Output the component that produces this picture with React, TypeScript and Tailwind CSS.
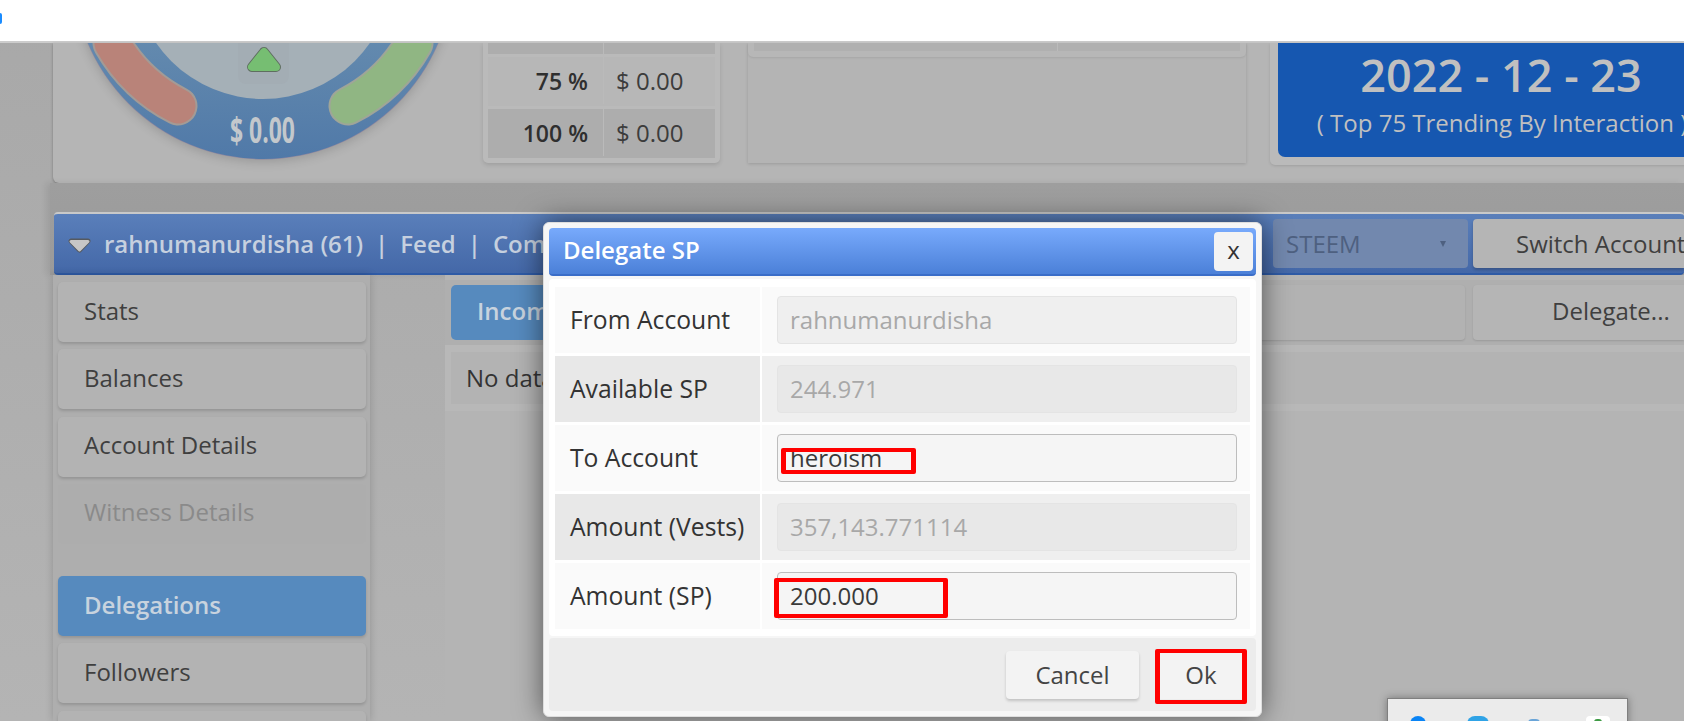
const sideItems = [
  { label: 'Stats' },
  { label: 'Balances' },
  { label: 'Account Details' },
  { label: 'Witness Details', disabled: true },
  { label: 'Delegations', active: true, spaced: true },
  { label: 'Followers' },
  { label: '' },
];

const formRows = [
  { label: 'From Account', value: 'rahnumanurdisha', disabled: true },
  { label: 'Available SP', value: '244.971', disabled: true, shaded: true },
  { label: 'To Account', value: 'heroism' },
  { label: 'Amount (Vests)', value: '357,143.771114', disabled: true, shaded: true },
  { label: 'Amount (SP)', value: '200.000' },
];

function Gauge() {
  return (
    <svg width="384" height="140" viewBox="71 43 384 140" className="shrink-0">
      <defs>
        <filter id="gaugeShadow" x="-10%" y="-10%" width="120%" height="120%">
          <feGaussianBlur stdDeviation="6" />
        </filter>
        <linearGradient id="ringFill" x1="0" y1="0" x2="0" y2="1">
          <stop offset="0.5" stopColor="#6f94b2" />
          <stop offset="1" stopColor="#5079a8" />
        </linearGradient>
      </defs>
      <circle cx="263" cy="-29" r="190" fill="#000" opacity="0.18" filter="url(#gaugeShadow)" />
      <circle cx="263" cy="-31" r="190.5" fill="#8f86a0" />
      <circle cx="263" cy="-31" r="190" fill="url(#ringFill)" />
      <circle cx="263" cy="-31" r="130" fill="#a5b0b7" />
      <path d="M112 43 A160 160 0 0 0 178 106" fill="none" stroke="#a39b96" strokeWidth="39" strokeLinecap="round" />
      <path d="M112 43 A160 160 0 0 0 178 106" fill="none" stroke="#b98379" strokeWidth="35" strokeLinecap="round" />
      <path d="M414 43 A160 160 0 0 1 348 106" fill="none" stroke="#9fa598" strokeWidth="39" strokeLinecap="round" />
      <path d="M414 43 A160 160 0 0 1 348 106" fill="none" stroke="#90b683" strokeWidth="35" strokeLinecap="round" />
      <rect x="238" y="30" width="51" height="54" rx="8" fill="#a3adb4" />
      <path d="M264 52 L252 67 L276 67 Z" fill="#5f6e60" stroke="#5f6e60" strokeWidth="10" strokeLinejoin="round" />
      <path d="M264 52 L252 67 L276 67 Z" fill="#76be72" stroke="#76be72" strokeWidth="8" strokeLinejoin="round" />
      <text
        x="230"
        y="143"
        textLength="65"
        lengthAdjust="spacingAndGlyphs"
        fontFamily="'Open Sans', sans-serif"
        fontWeight="700"
        fontSize="35"
        fill="#c3c8cc"
      >
        $ 0.00
      </text>
    </svg>
  );
}

function PayoutTable() {
  return (
    <div className="ml-[28px] w-[237px] h-[120px] shrink-0 bg-[#bababa] rounded-b-[5px] shadow-[0_2px_4px_rgba(0,0,0,0.12)] px-[5px] flex flex-col gap-[3px]">
      <div className="flex h-[11px] bg-[#adadad]">
        <div className="w-[116px] border-r border-[#bababa]" />
      </div>
      {[
        { pct: '75 %', shaded: false },
        { pct: '100 %', shaded: true },
      ].map((row) => (
        <div key={row.pct} className={`flex h-[49px] pb-[2px] items-center ${row.shaded ? 'bg-[#adadad]' : 'bg-[#b7b7b7]'}`}>
          <div className="w-[116px] h-full flex items-center justify-end pr-[15px] text-[23px] font-semibold text-[#2f2f2f] border-r border-[#bababa]">
            {row.pct}
          </div>
          <div className="pl-[12px] text-[#3c3c3c]">$ 0.00</div>
        </div>
      ))}
    </div>
  );
}

function TopPanel() {
  return (
    <div className="ml-[53px] h-[140px] bg-[#b5b5b5] rounded-bl-[6px] shadow-[0_1px_3px_rgba(0,0,0,0.3)] pl-[18px] flex items-start overflow-hidden">
      <Gauge />
      <PayoutTable />
      <div className="ml-[28px] w-[498px] h-[120px] shrink-0 bg-[#b4b4b4] shadow-[0_1px_3px_rgba(0,0,0,0.15)]">
        <div className="h-[14px] bg-[#b7b7b7] rounded-b-[5px] px-[6px] shadow-[0_1px_2px_rgba(0,0,0,0.08)]">
          <div className="h-[8px] flex bg-[#b0b0b0]">
            <div className="w-[304px] border-r border-[#bbbbbb]" />
          </div>
        </div>
      </div>
      <div className="ml-[24px] flex-1 h-[122px] bg-[#bababa] rounded-bl-[5px] pl-[8px] shadow-[0_1px_3px_rgba(0,0,0,0.12)]">
        <div className="h-[114px] bg-[#1657b0] rounded-bl-[7px] flex flex-col items-start text-[#c0c0c0]">
          <div className="w-[446px] shrink-0 text-center">
            <div className="text-[45px] leading-[52px] font-semibold mt-[6px]">2022 - 12 - 23</div>
            <div className="text-[24px] leading-[32px] whitespace-nowrap mt-[6px] pl-[2px]">( Top 75 Trending By Interaction )</div>
          </div>
        </div>
      </div>
    </div>
  );
}

function AccountBar() {
  return (
    <div className="ml-[4px] h-[63px] border-t-2 border-[#c9c9c9] bg-gradient-to-b from-[#5a7fba] to-[#4468a8] border-b-2 border-b-[#2f5ba6] rounded-[4px] flex items-center pl-[12px] overflow-hidden">
      <svg width="28" height="20" viewBox="0 0 28 20" className="shrink-0">
        <path d="M5 7 H22 L13.5 16 Z" fill="#55595f" stroke="#55595f" strokeWidth="5" strokeLinejoin="round" />
        <path d="M5 7.5 H22 L13.5 16 Z" fill="#c6c6c6" stroke="#c6c6c6" strokeWidth="3" strokeLinejoin="round" />
      </svg>
      <div className="ml-[10px] flex-1 flex items-center text-[#c6d0df] font-semibold whitespace-nowrap">
        <span>rahnumanurdisha (61)</span>
        <span className="mx-[12px]">|</span>
        <span>Feed</span>
        <span className="mx-[12px]">|</span>
        <span>Communities</span>
      </div>
      <div className="w-[195px] h-[49px] shrink-0 bg-[#7288ae] rounded-[4px] flex items-center justify-between pl-[13px] pr-[22px] text-[#4e6080]">
        <span>STEEM</span>
        <span className="w-0 h-0 border-x-[3.5px] border-x-transparent border-t-[6px] border-t-[#4e6080]" />
      </div>
      <div className="ml-[5px] w-[211px] h-[49px] shrink-0 bg-[#b5b5b5] rounded-l-[4px] flex items-center pl-[43px] text-[#3f3f3f] whitespace-nowrap shadow-[0_2px_3px_rgba(0,0,0,0.2)]">
        Switch Account
      </div>
    </div>
  );
}

function Sidebar() {
  return (
    <div className="w-[317px] shrink-0 ml-[53px] bg-[#aeaeae] pl-[5px] pr-[4px] pt-[7px] flex flex-col gap-[7.3px] shadow-[0_0_8px_rgba(0,0,0,0.18)]">
      {sideItems.map((item, i) => (
        <div
          key={i}
          className={`h-[60px] shrink-0 rounded-[5px] pl-[26px] pb-[3px] flex items-center shadow-[0_2px_3px_rgba(0,0,0,0.15)] ${
            item.spaced ? 'mt-[25px]' : ''
          } ${
            item.active
              ? 'bg-[#568abe] text-[#c8d3de] font-semibold'
              : item.disabled
                ? 'bg-[#adadad] text-[#8a8a8a] shadow-none'
                : 'bg-[#b3b3b3] text-[#3f3f3f]'
          }`}
        >
          {item.label}
        </div>
      ))}
    </div>
  );
}

function Content() {
  return (
    <div className="flex-1 min-w-0 ml-[75px] bg-[#b4b4b4]">
      <div className="mt-[5px] h-[65px] bg-[#afafaf] pl-[6px] py-[5px] flex gap-[8px]">
        <div className="w-[180px] bg-[#568abe] rounded-[5px] pl-[26px] pb-[4px] flex items-center font-semibold text-[#c8d3de]">
          Incoming
        </div>
        <div className="w-[826px] bg-[#b2b2b2] rounded-[4px] shadow-[0_1px_2px_rgba(0,0,0,0.12)]" />
        <div className="flex-1 bg-[#b5b5b5] rounded-l-[4px] pl-[79px] pb-[4px] flex items-center text-[#3f3f3f] shadow-[0_1px_2px_rgba(0,0,0,0.12)]">
          Delegate...
        </div>
      </div>
      <div className="h-[66px] bg-[#b8b8b8] pl-[6px] py-[7px]">
        <div className="h-full bg-[#b3b3b3] pl-[15px] flex items-center text-[#333]">No data</div>
      </div>
    </div>
  );
}

function DelegateModal() {
  return (
    <div className="absolute left-[543px] top-[222px] w-[719px] h-[495px] bg-[#f6f6f6] rounded-[6px] border border-[#dedede] shadow-[0_0_28px_rgba(0,0,0,0.55)] pt-[5px] px-[5px] flex flex-col">
      <div className="h-[48px] shrink-0 bg-gradient-to-b from-[#78aafc] to-[#4b80d8] border-b-2 border-[#3a6dc8] rounded-[4px] flex items-center justify-between pl-[14px] pr-[3px]">
        <span className="font-semibold text-white pb-[2px]">Delegate SP</span>
        <span className="w-[39px] h-[39px] bg-[#f3f3f3] rounded-[4px] flex items-center justify-center text-[#333] pb-[3px]">x</span>
      </div>
      <div className="mt-[3px] h-[357px] shrink-0 bg-white rounded-[4px] px-[6px] pt-[8px] flex flex-col gap-[3px]">
        {formRows.map((row) => (
          <div key={row.label} className="h-[66px] shrink-0 flex gap-[2px]">
            <div className={`w-[205px] shrink-0 pl-[15px] pb-[1px] flex items-center text-[24.7px] font-medium text-[#333] ${row.shaded ? 'bg-[#e8e8e8]' : 'bg-[#fafafa]'}`}>
              {row.label}
            </div>
            <div className={`flex-1 flex items-center pl-[15px] pr-[13px] ${row.shaded ? 'bg-[#efefef]' : 'bg-[#fafafa]'}`}>
              <div
                className={`h-[48px] w-full rounded-[4px] border pl-[12px] pb-[1px] flex items-center ${
                  row.disabled
                    ? `border-[#e4e4e4] text-[#a8a8a8] ${row.shaded ? 'bg-[#e8e8e8]' : 'bg-[#efefef]'}`
                    : 'border-[#bdbdbd] bg-[#f5f5f5] text-[#3a3a3a]'
                }`}
              >
                {row.value}
              </div>
            </div>
          </div>
        ))}
      </div>
      <div className="mt-[2px] h-[73px] shrink-0 bg-[#ececec] rounded-[4px] flex items-center justify-end gap-[21px] pr-[14px]">
        <div className="w-[133px] h-[48px] bg-[#f3f3f3] rounded-[4px] flex items-center justify-center text-[#444] shadow-[0_2px_3px_rgba(0,0,0,0.18)]">
          Cancel
        </div>
        <div className="w-[82px] h-[48px] bg-[#f3f3f3] flex items-center justify-center text-[#444]">Ok</div>
      </div>
      {/* red annotation boxes drawn over the screenshot */}
      <div className="absolute left-[237px] top-[225px] w-[135px] h-[26px] border-y-4 border-x-[5px] border-[#f00] rounded-[2px]" />
      <div className="absolute left-[230px] top-[355px] w-[174px] h-[40px] border-y-4 border-x-[5px] border-[#f00] rounded-[2px]" />
      <div className="absolute left-[611px] top-[426px] w-[92px] h-[55px] border-y-4 border-x-[5px] border-[#f00] rounded-[2px]" />
    </div>
  );
}

function TrayPopup() {
  return (
    <div className="absolute left-[1387px] top-[698px] w-[241px] h-[40px] bg-[#ebebeb] border border-[#7f7f7f] shadow-[0_0_8px_rgba(0,0,0,0.35)]">
      <div className="absolute left-[22px] top-[17px] w-[16px] h-[16px] rounded-full bg-[#0a84f5]" />
      <div className="absolute left-[79px] top-[17px] w-[22px] h-[10px] bg-[#2fa3e6] rounded-t-[8px]" />
      <div className="absolute left-[140px] top-[20px] w-[12px] h-[8px] bg-[#6aa5d8] rounded-t-[4px]" />
      <div className="absolute left-[198px] top-[17px] w-[24px] h-[20px] bg-white rounded-t-[4px] flex justify-center">
        <div className="w-[8px] h-[5px] mt-[3px] bg-[#3f9b45] rounded-t-[3px]" />
      </div>
    </div>
  );
}

export default function App() {
  return (
    <div
      className="relative h-[721px] w-[1684px] overflow-hidden bg-gradient-to-b from-[#a8a8a8] to-[#b4b4b4] text-[24px] leading-[32px]"
      style={{ fontFamily: "'Open Sans', sans-serif" }}
    >
      <div className="h-[43px] bg-white border-b-2 border-[#cccccc] flex items-center pb-[5px]">
        <div className="w-[2px] h-[11px] bg-[#1a8cff] rounded-r-full" />
      </div>
      <TopPanel />
      <div className="ml-[50px] pt-[29px] bg-gradient-to-b from-[#9e9e9e] to-[#9a9a9a] shadow-[-4px_0_6px_rgba(0,0,0,0.08)]">
        <AccountBar />
      </div>
      <div className="flex h-[446px]">
        <Sidebar />
        <Content />
      </div>
      <DelegateModal />
      <TrayPopup />
    </div>
  );
}
